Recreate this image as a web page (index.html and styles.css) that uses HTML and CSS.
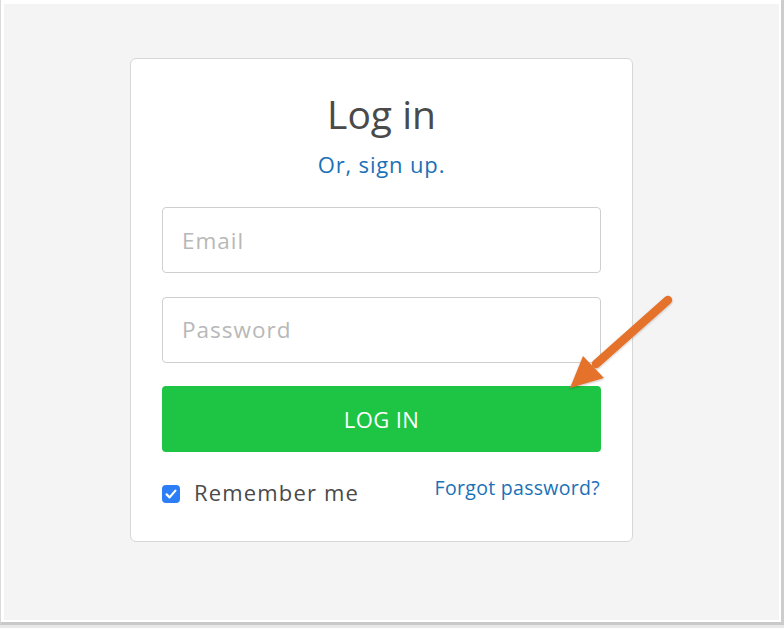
FILE: index.html
```html
<!DOCTYPE html>
<html lang="en">
<head>
<meta charset="utf-8">
<title>Log in</title>
<link rel="stylesheet" href="styles.css">
</head>
<body>
<div class="frame">
  <div class="canvas">
    <form class="card">
      <h1 class="title">Log in</h1>
      <a class="signup" href="#">Or, sign up.</a>
      <div class="fields">
        <input class="field" type="email" placeholder="Email">
        <input class="field" type="password" placeholder="Password">
        <button class="btn" type="button">LOG IN</button>
      </div>
      <div class="row">
        <label class="remember">
          <span class="check"><svg viewBox="0 0 18 18" width="18" height="18"><path d="M4.6 9.4 L7.6 12.4 L13.4 5.6" fill="none" stroke="#fff" stroke-width="2.2" stroke-linecap="round" stroke-linejoin="round"/></svg></span>
          <span class="remember-text">Remember me</span>
        </label>
        <a class="forgot" href="#">Forgot password?</a>
      </div>
    </form>
  </div>
</div>
<svg class="arrow" viewBox="0 0 784 628" width="784" height="628">
  <defs>
    <filter id="sh" x="-20%" y="-20%" width="140%" height="140%">
      <feDropShadow dx="0" dy="1" stdDeviation="1" flood-color="#000" flood-opacity="0.25"/>
    </filter>
  </defs>
  <g filter="url(#sh)">
    <line x1="668" y1="300" x2="596" y2="364" stroke="#e5722a" stroke-width="8.5" stroke-linecap="round"/>
    <polygon points="570,388 583,356 604,378" fill="#e5722a"/>
  </g>
</svg>
</body>
</html>
```
FILE: styles.css
```css
html { background: #e8e8e8; }
body {
  margin: 0;
  font-family: "Open Sans", "Liberation Sans", sans-serif;
}
.frame {
  width: 784px;
  height: 625px;
  box-sizing: border-box;
  border-left: 1px solid #dadada;
  border-right: 3px solid #cdcdcd;
  border-bottom: 3px solid #c9c9c9;
  padding: 4px 2px 2px 3px;
  background: #fff;
}
.canvas {
  height: 100%;
  background: #f4f4f4;
  padding: 54px 0 0 126px;
  box-sizing: border-box;
}
.card {
  width: 503px;
  box-sizing: border-box;
  background: #fff;
  border: 1px solid #d6d6d6;
  border-radius: 6px;
  padding: 32px 31px 36px;
  display: flex;
  flex-direction: column;
  align-items: center;
}
.title {
  margin: 0;
  font-size: 39px;
  line-height: 46px;
  font-weight: 400;
  color: #4a4a4a;
}
.signup {
  margin-top: 12px;
  font-size: 22px;
  line-height: 30px;
  letter-spacing: 0.85px;
  color: #1a71b6;
  text-decoration: none;
}
.fields {
  align-self: stretch;
  margin-top: 28px;
  display: flex;
  flex-direction: column;
  gap: 23.5px;
}
.field {
  height: 66px;
  box-sizing: border-box;
  border: 1px solid #cfcfcf;
  border-radius: 4px;
  padding: 0 19px;
  font-family: "Open Sans", "Liberation Sans", sans-serif;
  font-size: 22.5px;
  letter-spacing: 1px;
  color: #4a4a4a;
  background: #fff;
  outline: none;
}
.field::placeholder { color: #b8b8b8; }
.btn {
  height: 66px;
  border: 0;
  border-radius: 4px;
  background: #1ec443;
  color: #fff;
  font-family: "Open Sans", "Liberation Sans", sans-serif;
  font-size: 22px;
  letter-spacing: 0.4px;
  padding: 0;
}
.row {
  align-self: stretch;
  margin-top: 23px;
  display: flex;
  justify-content: space-between;
  align-items: flex-start;
}
.remember {
  display: flex;
  align-items: flex-start;
  gap: 14px;
  padding-top: 4px;
}
.check {
  width: 18px;
  height: 18px;
  margin-top: 6px;
  border-radius: 4px;
  background: #2b7ef6;
  display: flex;
}
.remember-text {
  font-size: 22px;
  line-height: 26px;
  letter-spacing: 1.15px;
  color: #4a4a4a;
}
.forgot {
  font-size: 19.5px;
  line-height: 26px;
  letter-spacing: 0.3px;
  color: #1a71b6;
  text-decoration: none;
  margin-right: 1px;
}
.arrow {
  position: absolute;
  left: 0;
  top: 0;
  pointer-events: none;
}
```
